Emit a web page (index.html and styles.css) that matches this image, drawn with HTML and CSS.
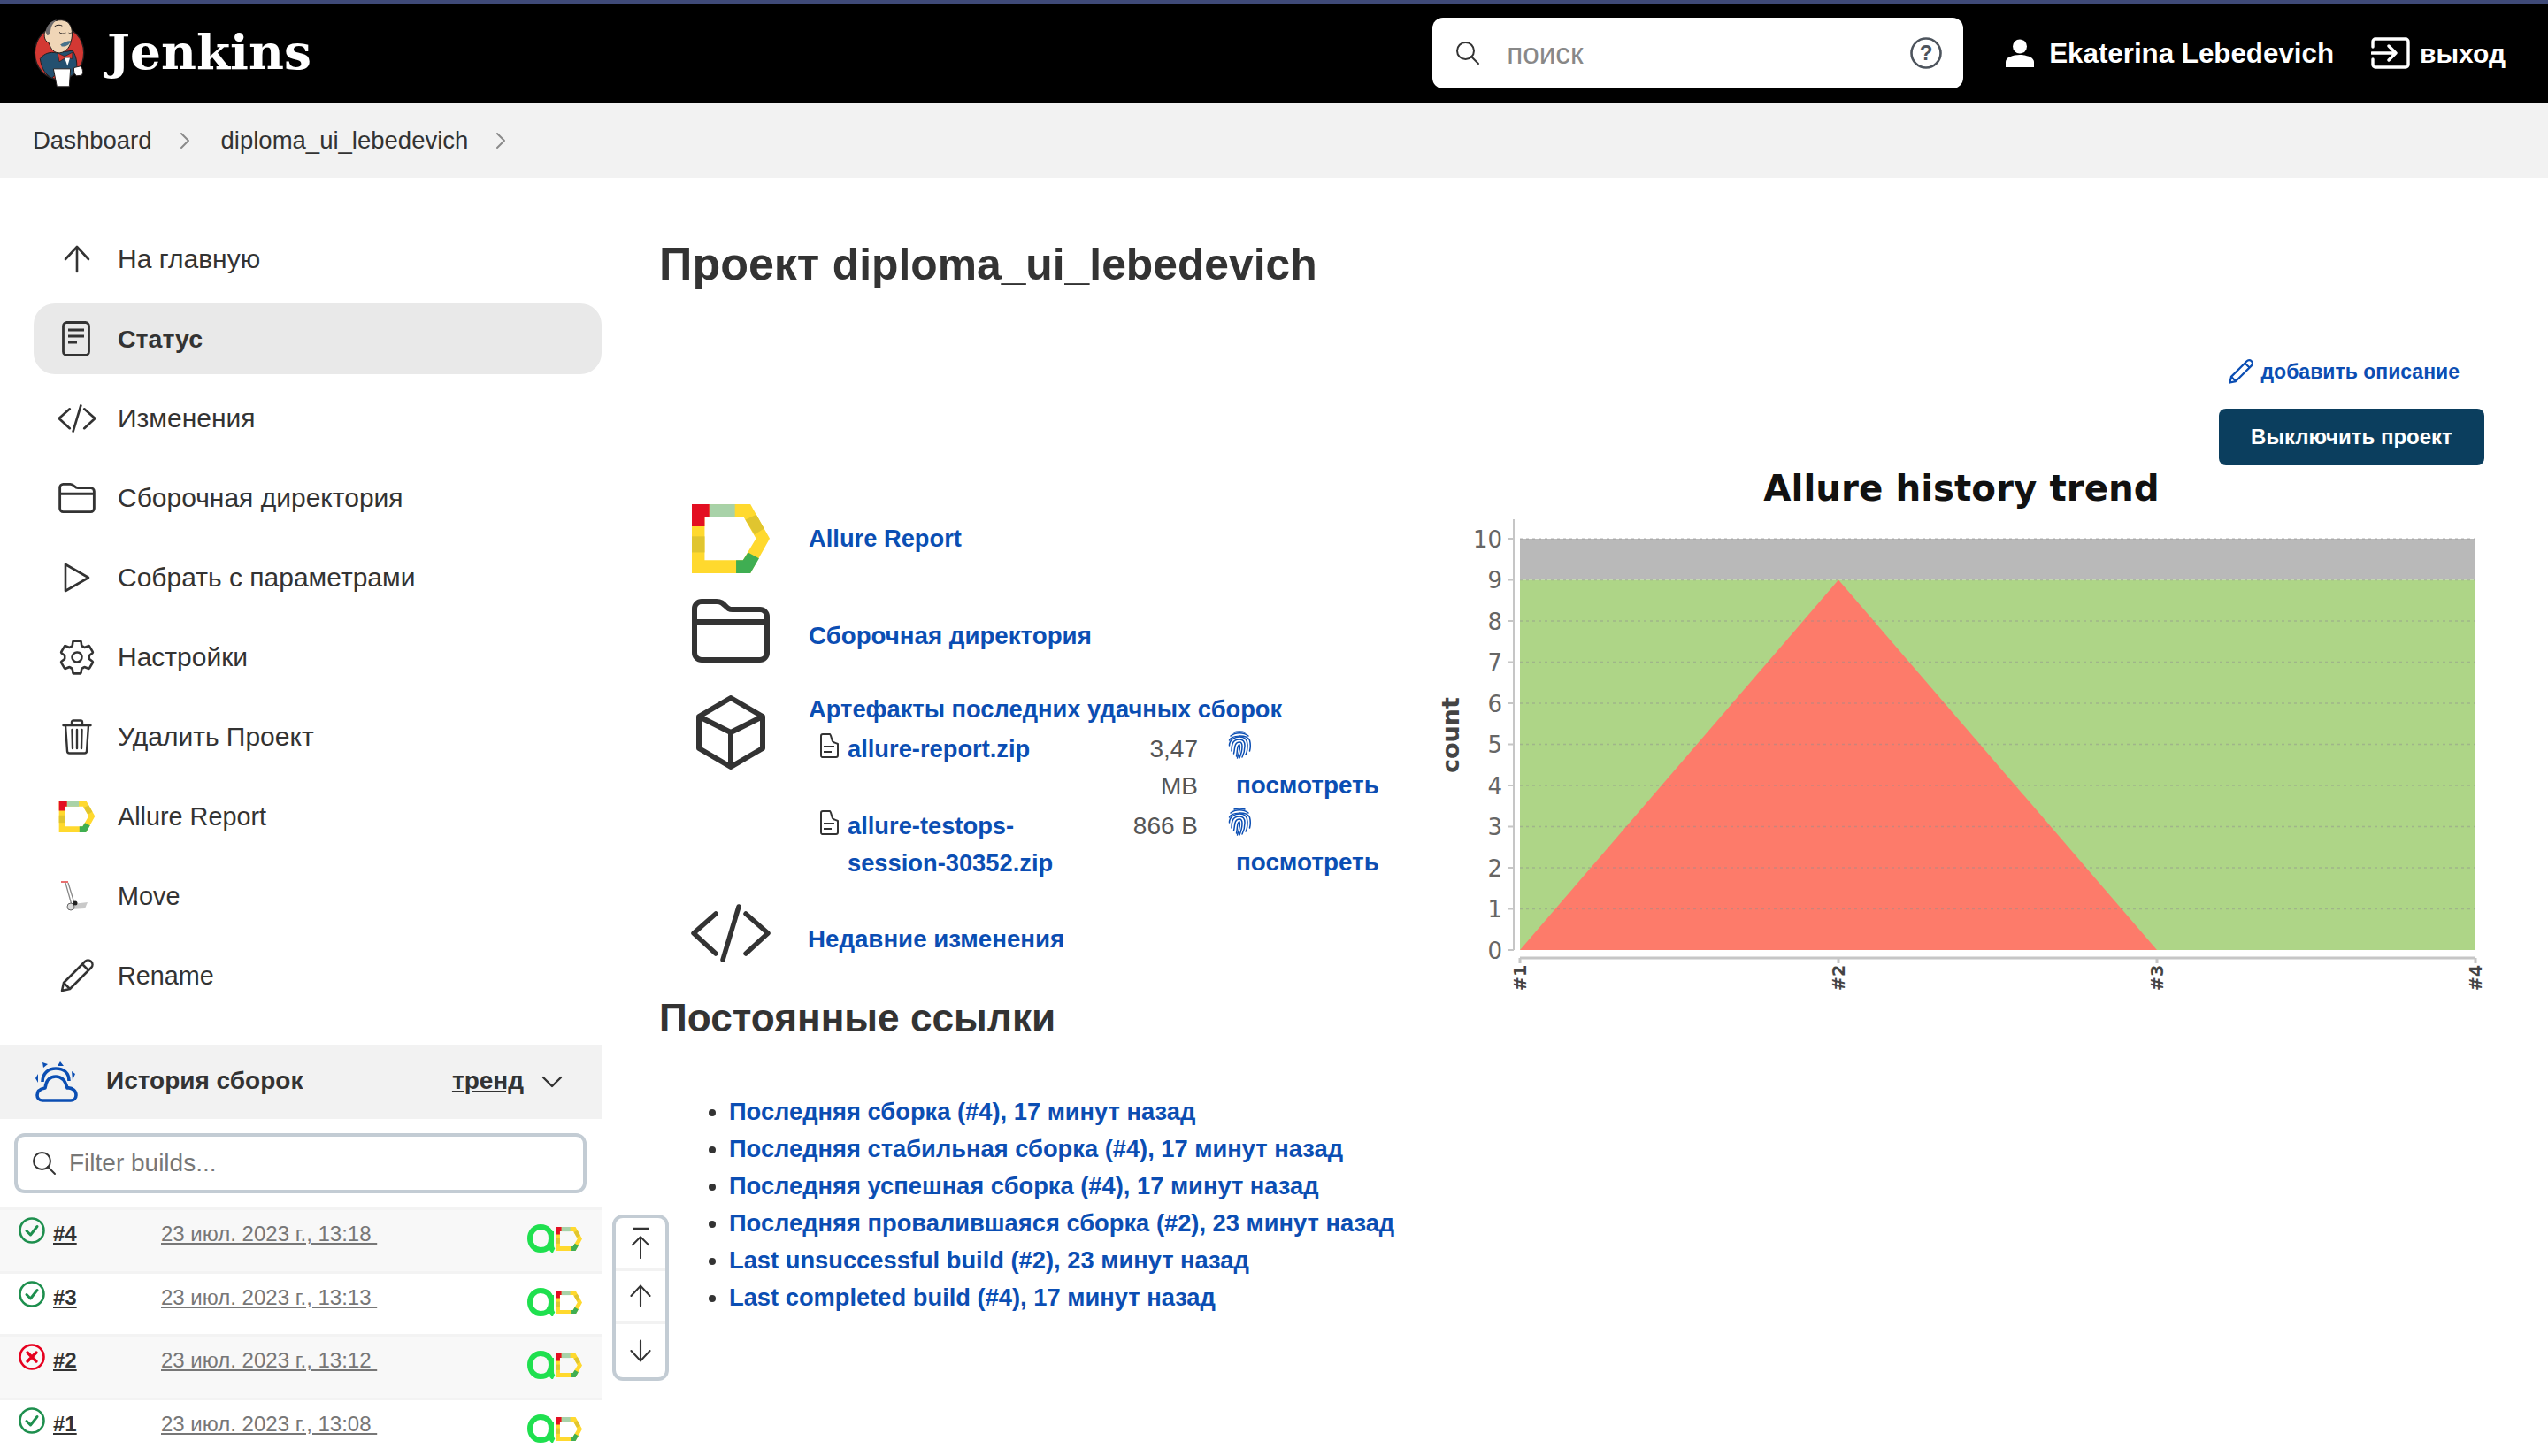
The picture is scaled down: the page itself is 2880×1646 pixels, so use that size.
FILE: index.html
```html
<!DOCTYPE html>
<html lang="ru">
<head>
<meta charset="utf-8">
<title>diploma_ui_lebedevich [Jenkins]</title>
<link rel="stylesheet" href="styles.css">
</head>
<body>
<svg class="defs" width="0" height="0" aria-hidden="true">
  <symbol id="allure" viewBox="65 58 262 232">
    <path fill="#ffd92e" fill-rule="evenodd" d="M65 58H262L327 173L262 290H65ZM108 102V246H237L281 173L240 102Z"/>
    <path fill="#e30f22" d="M65 58H124V102H108V132H65Z"/>
    <path fill="#a8d2a8" d="M124 58H210V102H124Z"/>
    <path fill="#e0c52f" d="M65 166H108V220H65Z"/>
    <path fill="#e0c52f" d="M245 110L282 93L308 140L276 160Z"/>
    <path fill="#3fae52" d="M214 246H237L254 220L291 240L262 290H214Z"/>
  </symbol>
  <symbol id="folder" viewBox="0 0 88 72">
    <path fill="none" stroke="#333" stroke-width="6" stroke-linejoin="round" d="M3 11a8 8 0 0 1 8-8h17c5 0 7 2 10 5s4 4 8 4h31a8 8 0 0 1 8 8v41a8 8 0 0 1-8 8H11a8 8 0 0 1-8-8ZM3 26H85"/>
  </symbol>
  <symbol id="code" viewBox="0 0 90 66">
    <path fill="none" stroke="#333" stroke-width="5.5" stroke-linecap="round" stroke-linejoin="round" d="M28 11L3 33L28 56M62 11L87 33L62 56M54 3L36 63"/>
  </symbol>
  <symbol id="arrow-up" viewBox="0 0 30 32">
    <path fill="none" stroke="#333" stroke-width="2.6" stroke-linecap="round" stroke-linejoin="round" d="M15 30V2M2 16L15 2L28 16"/>
  </symbol>
  <symbol id="doc" viewBox="0 0 24 30">
    <path fill="none" stroke="#333" stroke-width="2" stroke-linejoin="round" d="M3 4a2 2 0 0 1 2-2h8c1 0 2 6 3 8s5 2 6 3v13a2 2 0 0 1-2 2H4a2 2 0 0 1-1-2ZM6 16H18M6 22H15"/>
  </symbol>
  <symbol id="search" viewBox="0 0 28 28">
    <circle cx="11.5" cy="11.5" r="9.5" fill="none" stroke="#333" stroke-width="2"/>
    <path stroke="#333" stroke-width="2" stroke-linecap="round" d="M18 18L26 26"/>
  </symbol>
  <symbol id="print" viewBox="0 0 26 32">
    <g fill="none" stroke="#0b4eb3" stroke-width="1.5" stroke-linecap="round">
      <path d="M7 2C10 .5 16 .5 19 2"/>
      <path d="M3 6C8 1.5 18 1.5 23 6"/>
      <path d="M1.5 11C4 5 21 4 24.5 11C25.5 15 25.5 19 24.5 23"/>
      <path d="M1.5 17C1.5 10 8 7 13 7C19 7 22 11 22 16C22 20 22 24 20 27"/>
      <path d="M4 23C4 18 4 10 13 10C18 10 19 14 19 17C19 21 18 26 16 30"/>
      <path d="M6.5 26C8 21 6.5 13 13 13C16 13 16 16 16 18C16 22 15 26 13 31"/>
      <path d="M9.5 29C11 24 9.5 16 13 16C14 18 13 24 10.5 31"/>
    </g>
  </symbol>
  <symbol id="ok" viewBox="0 0 30 30">
    <circle cx="15" cy="15" r="13.5" fill="none" stroke="#1e8f4e" stroke-width="2.6"/>
    <path fill="none" stroke="#1e8f4e" stroke-width="3" stroke-linecap="round" stroke-linejoin="round" d="M9 15.5L13.5 20L21 10.5"/>
  </symbol>
  <symbol id="fail" viewBox="0 0 30 30">
    <circle cx="15" cy="15" r="13.5" fill="none" stroke="#e6001f" stroke-width="2.6"/>
    <path fill="none" stroke="#e6001f" stroke-width="3.4" stroke-linecap="round" d="M10 10L20 20M20 10L10 20"/>
  </symbol>
  <symbol id="ball" viewBox="0 0 62 32">
    <path fill="none" stroke="#1fe04f" stroke-width="6" d="M27 16C27 8 23 3 15 3C8 3 3 9 3 16C3 23 8 29 15 29C23 29 27 24 27 16ZM27 8V24C27 27 28 29 30 30"/>
    <svg x="32" y="3" width="30" height="27" viewBox="65 58 262 232" preserveAspectRatio="none">
      <use href="#allure-shape"/>
    </svg>
  </symbol>
  <g id="allure-shape">
    <path fill="#ffd92e" fill-rule="evenodd" d="M65 58H262L327 173L262 290H65ZM108 102V246H237L281 173L240 102Z"/>
    <path fill="#e30f22" d="M65 58H124V102H108V132H65Z"/>
    <path fill="#a8d2a8" d="M124 58H210V102H124Z"/>
    <path fill="#e0c52f" d="M65 166H108V220H65Z"/>
    <path fill="#e0c52f" d="M245 110L282 93L308 140L276 160Z"/>
    <path fill="#3fae52" d="M214 246H237L254 220L291 240L262 290H214Z"/>
  </g>
</svg>

<header class="topbar">
  <a class="brand" href="#">
    <svg class="butler" viewBox="110 58 180 245">
      <ellipse cx="200" cy="180" rx="83" ry="90" fill="#d33833" stroke="#231f20" stroke-width="4"/>
      <path fill="#24506f" stroke="#231f20" stroke-width="3" d="M135 200C150 180 170 176 190 180L245 172C258 190 262 215 258 245L235 262L190 250L175 265C155 255 140 235 135 200Z"/>
      <path fill="#f0d6b7" stroke="#231f20" stroke-width="3" d="M156 100C165 72 205 60 228 75C246 90 246 120 240 140C236 165 215 182 195 180C175 176 170 160 164 145C148 140 145 115 156 100Z"/>
      <path fill="#6d6b6d" d="M156 100C160 84 176 68 192 68C176 78 170 96 170 112C166 118 160 124 158 118C154 112 154 106 156 100Z"/>
      <path fill="none" stroke="#231f20" stroke-width="3" d="M200 110C206 116 216 116 222 112M232 112C236 116 240 114 242 110M205 152C215 150 228 148 240 140M184 90C192 84 202 84 210 88"/>
      <path fill="#49728b" d="M205 152C215 144 232 138 238 140C236 152 222 160 208 158Z"/>
      <path fill="#d33833" stroke="#231f20" stroke-width="2" d="M194 180L218 192L245 178L244 200L222 196L200 210Z"/>
      <path fill="#fff" d="M218 197L236 197L228 224Z"/>
      <path fill="#fff" stroke="#231f20" stroke-width="3" d="M180 234H238L234 294H192Z"/>
      <path fill="#fff" stroke="#231f20" stroke-width="3" d="M250 230L272 225C280 232 282 248 276 256L258 258C250 250 248 240 250 230Z"/>
    </svg>
    <span class="brand-name">Jenkins</span>
  </a>
  <div class="search">
    <svg class="search-ico"><use href="#search"/></svg>
    <span class="search-text">поиск</span>
    <svg class="help" viewBox="0 0 36 36">
      <circle cx="18" cy="18" r="16.5" fill="none" stroke="#4d545d" stroke-width="2.6"/>
      <text x="18" y="26" class="help-q">?</text>
    </svg>
  </div>
  <a class="user" href="#">
    <svg class="user-ico" viewBox="0 0 34 32"><circle cx="17" cy="8.5" r="8" fill="#fff"/><path fill="#fff" d="M1 32V26C1 21 9 18 17 18S33 21 33 26V32Z"/></svg>
    <span class="user-name">Ekaterina Lebedevich</span>
  </a>
  <a class="logout" href="#">
    <svg class="logout-ico" viewBox="0 0 44 36">
      <path fill="none" stroke="#fff" stroke-width="3.4" stroke-linecap="round" stroke-linejoin="round" d="M2 11V5A3 3 0 0 1 5 2H39A3 3 0 0 1 42 5V31A3 3 0 0 1 39 34H5A3 3 0 0 1 2 31V25"/>
      <path fill="none" stroke="#fff" stroke-width="3.4" stroke-linecap="round" stroke-linejoin="round" d="M1 18H28M20 10L28 18L20 26"/>
    </svg>
    <span class="logout-text">выход</span>
  </a>
</header>

<nav class="crumbs">
  <a href="#">Dashboard</a>
  <svg class="crumb-sep" viewBox="0 0 12 20"><path fill="none" stroke="#8a8a8a" stroke-width="2" stroke-linecap="round" stroke-linejoin="round" d="M2 2L10 10L2 18"/></svg>
  <a href="#">diploma_ui_lebedevich</a>
  <svg class="crumb-sep" viewBox="0 0 12 20"><path fill="none" stroke="#8a8a8a" stroke-width="2" stroke-linecap="round" stroke-linejoin="round" d="M2 2L10 10L2 18"/></svg>
</nav>

<div class="page">
  <aside class="side">
    <div class="side-menu">
      <a class="mi" href="#"><span class="mi-ico"><svg class="i-up"><use href="#arrow-up"/></svg></span>На главную</a>
      <a class="mi active" href="#"><span class="mi-ico"><svg class="i-doc" viewBox="0 0 32 40"><rect x="1.5" y="1.5" width="29" height="37" rx="4" fill="none" stroke="#333" stroke-width="2.8"/><path stroke="#333" stroke-width="2.8" d="M7 10H25M7 17H25M7 24H17"/></svg></span>Статус</a>
      <a class="mi" href="#"><span class="mi-ico"><svg class="i-code"><use href="#code"/></svg></span>Изменения</a>
      <a class="mi" href="#"><span class="mi-ico"><svg class="i-folder"><use href="#folder"/></svg></span>Сборочная директория</a>
      <a class="mi" href="#"><span class="mi-ico"><svg class="i-play" viewBox="0 0 30 34"><path fill="none" stroke="#333" stroke-width="2.6" stroke-linejoin="round" d="M2 2V32L28 17Z"/></svg></span>Собрать с параметрами</a>
      <a class="mi" href="#"><span class="mi-ico"><svg class="i-gear" viewBox="0 0 512 512"><path fill="none" stroke="#333" stroke-width="30" stroke-linejoin="round" d="M262.29 192.31a64 64 0 1057.4 57.4 64.13 64.13 0 00-57.4-57.4zM416.39 256a154.34 154.34 0 01-1.53 20.79l45.21 35.46a10.81 10.81 0 012.45 13.75l-42.77 74a10.81 10.81 0 01-13.14 4.59l-44.9-18.08a16.11 16.11 0 00-15.17 1.75A164.48 164.48 0 01325 400.8a15.94 15.94 0 00-8.82 12.14l-6.73 47.89a11.08 11.08 0 01-10.68 9.17h-85.54a11.11 11.11 0 01-10.69-8.87l-6.72-47.82a16.07 16.07 0 00-9-12.22 155.3 155.3 0 01-21.46-12.57 16 16 0 00-15.11-1.71l-44.89 18.07a10.81 10.81 0 01-13.14-4.58l-42.77-74a10.8 10.8 0 012.45-13.75l38.21-30a16.05 16.05 0 006-14.08c-.36-4.17-.58-8.33-.58-12.5s.21-8.27.58-12.35a16 16 0 00-6.07-13.94l-38.19-30A10.81 10.81 0 0149.48 186l42.77-74a10.81 10.81 0 0113.14-4.59l44.9 18.08a16.11 16.11 0 0015.17-1.75A164.48 164.48 0 01187 111.2a15.94 15.94 0 008.82-12.14l6.73-47.89A11.08 11.08 0 01213.23 42h85.54a11.11 11.11 0 0110.69 8.87l6.72 47.82a16.07 16.07 0 009 12.22 155.3 155.3 0 0121.46 12.57 16 16 0 0015.11 1.71l44.89-18.07a10.81 10.81 0 0113.14 4.58l42.77 74a10.8 10.8 0 01-2.45 13.75l-38.21 30a16.05 16.05 0 00-6.05 14.08c.33 4.14.55 8.3.55 12.47z"/></svg></span>Настройки</a>
      <a class="mi" href="#"><span class="mi-ico"><svg class="i-trash" viewBox="0 0 34 40"><path fill="none" stroke="#333" stroke-width="2.4" stroke-linecap="round" stroke-linejoin="round" d="M1.5 7H32.5M4 7L6 36C6 37.5 7 38.5 8.5 38.5H25.5C27 38.5 28 37.5 28 36L30 7M11 7V3.5C11 2 12 1.5 13 1.5H21C22 1.5 23 2 23 3.5V7M11.5 12L12 33M17 12V33M22.5 12L22 33"/></svg></span>Удалить Проект</a>
      <a class="mi latin" href="#"><span class="mi-ico"><svg class="i-allure"><use href="#allure"/></svg></span>Allure Report</a>
      <a class="mi latin" href="#"><span class="mi-ico"><svg class="i-move" viewBox="0 0 32 36">
        <path fill="none" stroke="#888" stroke-width="1.3" d="M6 3L13 28M9 3L16 26"/>
        <path stroke="#d33" stroke-width="1.4" d="M1 2H9"/>
        <path fill="#c9c9c9" d="M14 27L31 25L28 32L13 33Z"/>
        <circle cx="12" cy="30" r="4" fill="#ddd" stroke="#666" stroke-width="1"/>
        <circle cx="17" cy="26" r="2.5" fill="#222"/>
      </svg></span>Move</a>
      <a class="mi latin" href="#"><span class="mi-ico"><svg class="i-pencil" viewBox="0 0 38 38"><path fill="none" stroke="#333" stroke-width="2.5" stroke-linecap="round" stroke-linejoin="round" d="M2 36L4 27L28 3C30 1 33 1 35 3S37 8 35 10L11 34ZM4 27L11 34M25 6L32 13"/></svg></span>Rename</a>
    </div>

    <section class="history">
      <div class="history-head">
        <svg class="cloud" viewBox="0 0 48 46">
          <path fill="none" stroke="#0b4eb3" stroke-width="3.6" stroke-linejoin="round" d="M11 30C12 22 16 17 23 17C30 17 34 22 36 30C42 29 46 34 46 38C46 42 43 44 40 44H8C4 44 2 41 2 38C2 34 5 31 11 30Z"/>
          <path fill="none" stroke="#0b4eb3" stroke-width="3.6" d="M8 23C8 13 15 8 23 8C32 8 38 13 38 22"/>
          <path fill="#0b4eb3" d="M8 1L14 3L9 7ZM28 0L32 5H25ZM0 19L3 14V24ZM45 14L42 21L41 11Z"/>
        </svg>
        <span class="history-title">История сборок</span>
        <a class="trend" href="#">тренд</a>
        <svg class="chev" viewBox="0 0 24 14"><path fill="none" stroke="#333" stroke-width="2.4" stroke-linecap="round" stroke-linejoin="round" d="M2 2L12 12L22 2"/></svg>
      </div>
      <div class="filter">
        <svg class="filter-ico"><use href="#search"/></svg>
        <span class="filter-text">Filter builds...</span>
      </div>
      <div class="builds">
        <div class="build odd"><svg class="st"><use href="#ok"/></svg><a class="num" href="#">#4</a><a class="date" href="#">23 июл. 2023 г., 13:18&nbsp;</a><svg class="ball"><use href="#ball"/></svg></div>
        <div class="build"><svg class="st"><use href="#ok"/></svg><a class="num" href="#">#3</a><a class="date" href="#">23 июл. 2023 г., 13:13&nbsp;</a><svg class="ball"><use href="#ball"/></svg></div>
        <div class="build odd"><svg class="st"><use href="#fail"/></svg><a class="num" href="#">#2</a><a class="date" href="#">23 июл. 2023 г., 13:12&nbsp;</a><svg class="ball"><use href="#ball"/></svg></div>
        <div class="build"><svg class="st"><use href="#ok"/></svg><a class="num" href="#">#1</a><a class="date" href="#">23 июл. 2023 г., 13:08&nbsp;</a><svg class="ball"><use href="#ball"/></svg></div>
      </div>
      <div class="pager">
        <div class="pg"><svg class="pg-ico" viewBox="0 0 30 48"><path stroke="#333" stroke-width="4" d="M3 3H27"/><path fill="none" stroke="#333" stroke-width="2.6" stroke-linecap="round" stroke-linejoin="round" d="M15 47V15M3 27L15 15L27 27"/></svg></div>
        <div class="pg"><svg class="pg-ico2"><use href="#arrow-up"/></svg></div>
        <div class="pg pg-last"><svg class="pg-ico2 flip"><use href="#arrow-up"/></svg></div>
      </div>
    </section>
  </aside>

  <main class="main">
    <h1 class="title">Проект <span class="title-latin">diploma_ui_lebedevich</span></h1>
    <div class="actions">
      <a class="add-desc" href="#"><svg class="add-ico" viewBox="0 0 38 38"><path fill="none" stroke="#0b4eb3" stroke-width="3" stroke-linecap="round" stroke-linejoin="round" d="M2 36L4 27L28 3C30 1 33 1 35 3S37 8 35 10L11 34ZM4 27L11 34M25 6L32 13"/></svg>добавить описание</a>
      <button class="disable" type="button">Выключить проект</button>
    </div>
    <div class="columns">
      <div class="tasks">
        <div class="task t1"><svg class="big-allure"><use href="#allure"/></svg><a class="lnk" href="#">Allure Report</a></div>
        <div class="task t2"><svg class="big-folder"><use href="#folder"/></svg><a class="lnk" href="#">Сборочная директория</a></div>
        <div class="task t3">
          <svg class="big-cube" viewBox="0 0 78 84"><path fill="none" stroke="#333" stroke-width="6" stroke-linejoin="round" d="M39 3L75 24V60L39 81L3 60V24ZM3 24L39 42L75 24M39 42V81"/></svg>
          <div class="artifacts">
            <a class="lnk" href="#">Артефакты последних удачных сборок</a>
            <div class="art-grid">
              <svg class="art-doc"><use href="#doc"/></svg>
              <a class="lnk" href="#">allure-report.zip</a>
              <span class="size">3,47 MB</span>
              <div class="view"><svg class="print"><use href="#print"/></svg><a class="lnk" href="#">посмотреть</a></div>
              <svg class="art-doc"><use href="#doc"/></svg>
              <a class="lnk" href="#">allure-testops-session-30352.zip</a>
              <span class="size">866 B</span>
              <div class="view"><svg class="print"><use href="#print"/></svg><a class="lnk" href="#">посмотреть</a></div>
            </div>
          </div>
        </div>
        <div class="task t4"><svg class="big-code"><use href="#code"/></svg><a class="lnk" href="#">Недавние изменения</a></div>
      </div>
      <svg class="chart" viewBox="1610 526 1220 604">
        <text class="c-title" x="2217" y="565">Allure history trend</text>
        <path fill="#b9b9b9" d="M1718 608H2798V654.5H1718Z"/>
        <path fill="#aed587" d="M1718 654.5H2798V1073H1718Z"/>
        <path fill="#fd7b6a" d="M1718 1073L2078 654.5L2438 1073Z"/>
        <g class="c-grid">
          <path d="M1718 608H2798M1718 654.5H2798M1718 701H2798M1718 747.5H2798M1718 794H2798M1718 840.5H2798M1718 887H2798M1718 933.5H2798M1718 980H2798M1718 1026.5H2798"/>
        </g>
        <path class="c-axis" d="M1711 586V1073M1704 608H1711M1704 654.5H1711M1704 701H1711M1704 747.5H1711M1704 794H1711M1704 840.5H1711M1704 887H1711M1704 933.5H1711M1704 980H1711M1704 1026.5H1711M1704 1073H1711"/>
        <path class="c-axis2" d="M1718 1082H2798M1718 1082V1088M2078 1082V1088M2438 1082V1088M2798 1082V1088"/>
        <g class="c-y">
          <text x="1698" y="618">10</text><text x="1698" y="664">9</text><text x="1698" y="711">8</text><text x="1698" y="757">7</text><text x="1698" y="804">6</text><text x="1698" y="850">5</text><text x="1698" y="897">4</text><text x="1698" y="943">3</text><text x="1698" y="990">2</text><text x="1698" y="1036">1</text><text x="1698" y="1083">0</text>
        </g>
        <text class="c-count" transform="translate(1649 830) rotate(-90)">count</text>
        <g class="c-x">
          <text transform="translate(1725 1119) rotate(-90)">#1</text>
          <text transform="translate(2085 1119) rotate(-90)">#2</text>
          <text transform="translate(2445 1119) rotate(-90)">#3</text>
          <text transform="translate(2805 1119) rotate(-90)">#4</text>
        </g>
      </svg>
    </div>
    <h2 class="perma-title">Постоянные ссылки</h2>
    <ul class="perma">
      <li><a class="lnk" href="#">Последняя сборка (#4), 17 минут назад</a></li>
      <li><a class="lnk" href="#">Последняя стабильная сборка (#4), 17 минут назад</a></li>
      <li><a class="lnk" href="#">Последняя успешная сборка (#4), 17 минут назад</a></li>
      <li><a class="lnk" href="#">Последняя провалившаяся сборка (#2), 23 минут назад</a></li>
      <li><a class="lnk" href="#">Last unsuccessful build (#2), 23 минут назад</a></li>
      <li><a class="lnk" href="#">Last completed build (#4), 17 минут назад</a></li>
    </ul>
  </main>
</div>
</body>
</html>
```

FILE: styles.css
```css
* { box-sizing: border-box; }
html, body { margin: 0; padding: 0; height: 100%; overflow: hidden; }
body { font-family: "Liberation Sans", Arial, sans-serif; font-size: 28px; color: #333; background: #fff; }
a { color: inherit; text-decoration: none; }
svg { display: block; flex: none; }
.defs { position: absolute; }

.topbar { height: 116px; background: #000; border-top: 4px solid #3f4a78; display: flex; align-items: center; padding: 0 48px 0 37px; color: #fff; }
.brand { display: flex; align-items: center; }
.butler { width: 60px; height: 82px; }
.brand-name { font-family: "DejaVu Serif", serif; font-weight: 700; font-size: 55px; margin: -4px 0 0 24px; color: #fff; line-height: 1; }
.search { width: 600px; height: 80px; margin-left: auto; background: #fff; border-radius: 12px; display: flex; align-items: center; padding: 0 24px 0 26px; color: #888; }
.search-ico { width: 28px; height: 28px; }
.search-text { font-size: 33.3px; margin: 2px 0 0 30px; flex: 1; }
.help { width: 36px; height: 36px; }
.help-q { font-family: "Liberation Sans", sans-serif; font-size: 24px; font-weight: 700; fill: #4d545d; text-anchor: middle; }
.user { display: flex; align-items: center; margin-left: 47px; font-weight: 700; font-size: 31.3px; }
.user-name { margin-top: 2px; }
.user-ico { width: 34px; height: 32px; margin-right: 16px; }
.logout { display: flex; align-items: center; margin-left: 42px; font-weight: 700; font-size: 30px; }
.logout-text { margin-top: 2px; }
.logout-ico { width: 44px; height: 36px; margin-right: 11px; }

.crumbs { height: 85px; background: #f2f2f2; display: flex; align-items: center; padding-left: 37px; font-size: 27.5px; }
.crumb-sep { width: 12px; height: 20px; margin: 0 35px 0 31px; }

.page { display: flex; height: 1445px; }
.side { width: 680px; flex: none; padding-top: 52px; }
.side-menu { padding-left: 38px; display: flex; flex-direction: column; gap: 10px; }
.mi { height: 80px; display: flex; align-items: center; border-radius: 24px; font-size: 30px; padding-left: 25px; }
.mi.latin { font-size: 28.8px; }
.mi.active { background: #e9e9e9; font-weight: 700; font-size: 28.5px; }
.mi-ico { width: 70px; display: flex; justify-content: flex-start; align-items: center; }
.i-up { width: 30px; height: 32px; margin-left: 9px; }
.i-doc { width: 32px; height: 40px; margin-left: 7px; }
.i-code { width: 44px; height: 32px; margin-left: 2px; }
.i-folder { width: 42px; height: 34px; margin-left: 3px; }
.i-play { width: 30px; height: 34px; margin-left: 9px; }
.i-gear { width: 44px; height: 44px; margin-left: 2px; }
.i-trash { width: 34px; height: 40px; margin-left: 7px; }
.i-allure { width: 42px; height: 36px; margin-left: 3px; }
.i-move { width: 32px; height: 36px; margin-left: 5px; }
.i-pencil { width: 38px; height: 38px; margin-left: 5px; }

.history { position: relative; margin-top: 38px; }
.history-head { height: 84px; background: #f2f2f2; display: flex; align-items: center; padding: 0 44px 0 40px; }
.cloud { width: 48px; height: 46px; }
.history-title { font-weight: 700; font-size: 28px; margin: -3px 0 0 32px; flex: 1; }
.trend { font-size: 28px; text-decoration: underline; font-weight: 700; margin-top: -3px; }
.chev { width: 24px; height: 14px; margin-left: 20px; }
.filter { margin: 16px 17px 16px 16px; height: 68px; border: 4px solid #c3ccd4; border-radius: 12px; display: flex; align-items: center; padding-left: 16px; color: #777; }
.filter-ico { width: 28px; height: 28px; }
.filter-text { margin-left: 14px; font-size: 28px; }
.builds { display: flex; flex-direction: column; }
.build { height: 71.5px; border-top: 3px solid #f3f3f3; display: flex; align-items: flex-start; padding: 8px 22px 0 21px; font-size: 24px; }
.build.odd { background: #f8f8f8; }
.st { width: 30px; height: 30px; }
.num { font-weight: 700; text-decoration: underline; margin: 5px 0 0 9px; width: 122px; }
.date { color: #777; text-decoration: underline; margin-top: 5px; width: 414px; }
.ball { width: 62px; height: 32px; margin-top: 8px; margin-left: auto; }
.pager { position: absolute; left: 692px; top: 192px; width: 64px; height: 188px; border: 4px solid #c3ccd4; border-radius: 12px; background: #fff; display: flex; flex-direction: column; overflow: hidden; }
.pg { height: 60px; flex: none; display: flex; align-items: center; justify-content: center; border-bottom: 4px solid #f2f2f2; }
.pg-last { height: 60px; border-bottom: 0; }
.pg-ico { width: 26px; height: 36px; }
.pg-ico2 { width: 26px; height: 26px; }
.flip { transform: rotate(180deg); }

.main { flex: 1; padding: 0 72px 0 65px; min-width: 0; }
.title { margin: 0; font-size: 52px; font-weight: 700; line-height: 60px; padding-top: 67px; color: #333; }
.title-latin { font-size: 49.8px; }
.actions { display: flex; flex-direction: column; align-items: flex-end; margin-top: 74px; }
.add-desc { display: flex; align-items: center; color: #0b4eb3; font-weight: 700; font-size: 23px; margin-right: 28px; height: 34px; }
.add-ico { width: 28px; height: 28px; margin-right: 9px; }
.disable { margin-top: 25px; width: 300px; height: 64px; background: #0b3e5e; color: #fff; border: 0; border-radius: 8px; font-family: inherit; font-weight: 700; font-size: 24px; }

.columns { display: flex; margin-top: 1px; height: 604px; }
.tasks { width: 865px; flex: none; padding: 43px 0 0 37px; }
.task { display: flex; }
.lnk { color: #0b4eb3; font-weight: 700; font-size: 27.3px; line-height: 42px; }
.t1 { height: 78px; align-items: center; }
.t1 .big-allure { width: 88px; height: 78px; margin-right: 44px; }
.t2 { margin-top: 29px; height: 72px; }
.t2 .lnk { margin-top: 21px; font-size: 27.7px; }
.big-folder { width: 88px; height: 72px; margin-right: 44px; }
.t3 { margin-top: 37px; }
.big-cube { width: 78px; height: 84px; margin: 0 49px 0 5px; }
.artifacts { margin-top: -5px; }
.art-grid { display: grid; grid-template-columns: 44px 250px 146px 200px; row-gap: 3px; margin-top: 3px; }
.art-doc { width: 24px; height: 30px; margin: 2px 0 0 11px; }
.size { color: #555; font-size: 28px; line-height: 42px; text-align: right; padding-left: 55px; }
.view { margin-left: 43px; }
.print { width: 26px; height: 32px; margin-left: -9px; }
.view .lnk { display: block; margin-top: 9px; font-size: 27.8px; }
.t4 { margin-top: 25px; height: 66px; }
.big-code { width: 90px; height: 66px; margin-right: 42px; margin-left: -1px; }
.t4 .lnk { margin-top: 19px; font-size: 27.7px; }

.chart { width: 1220px; height: 604px; }
.c-title { font-family: "DejaVu Sans", sans-serif; font-weight: 700; font-size: 40.4px; text-anchor: middle; fill: #111; }
.c-grid path { stroke: #8e8e8e; stroke-opacity: .45; stroke-width: 1.6; stroke-dasharray: 3 4; fill: none; }
.c-axis { stroke: #c6c6c6; stroke-width: 2; fill: none; }
.c-axis2 { stroke: #c6c6c6; stroke-width: 3; fill: none; }
.c-y text { font-family: "DejaVu Sans", sans-serif; font-size: 26px; text-anchor: end; fill: #666; }
.c-count { font-family: "DejaVu Sans", sans-serif; font-weight: 700; font-size: 27px; text-anchor: middle; fill: #444; }
.c-x text { font-family: "DejaVu Sans", sans-serif; font-weight: 700; font-size: 19px; fill: #444; }

.perma-title { margin: -6px 0 0; font-size: 44.2px; font-weight: 700; line-height: 52px; color: #333; }
.perma { list-style: disc; margin: 59px 0 0; padding: 0 0 0 79px; }
.perma li { height: 42px; line-height: 42px; font-size: 28px; }
```
